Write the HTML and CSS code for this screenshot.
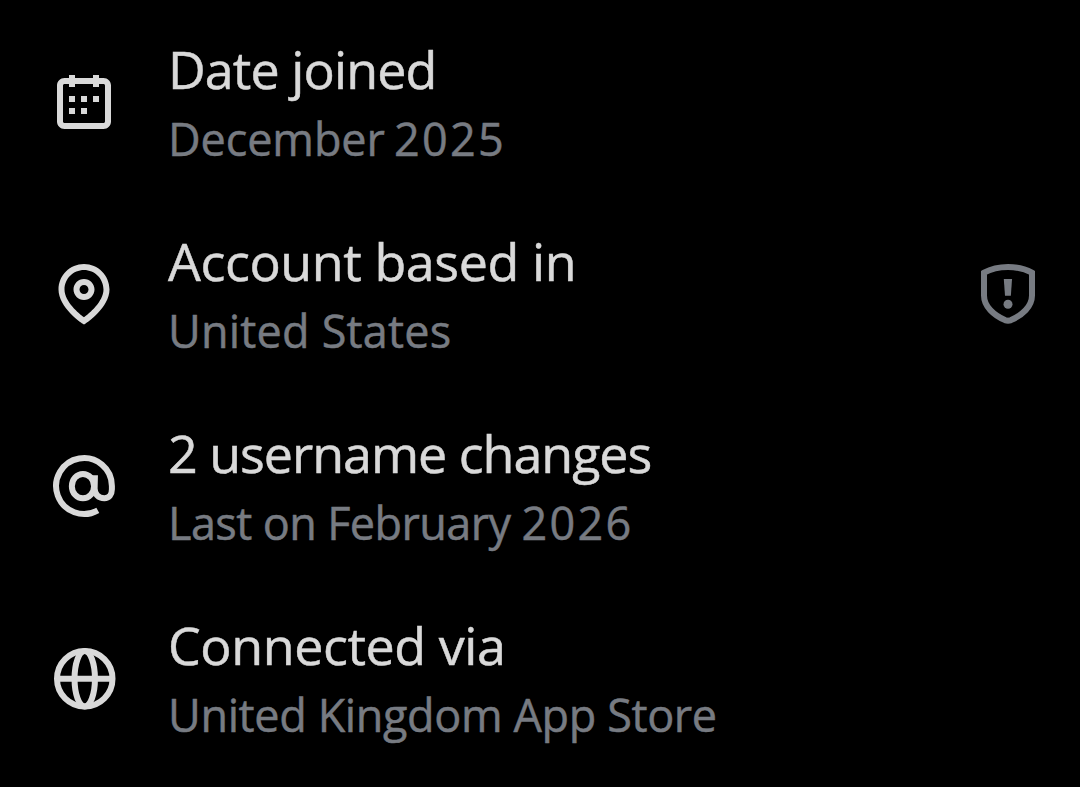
FILE: index.html
```
<!DOCTYPE html>
<html lang="en">
<head>
    <meta charset="UTF-8">
    <meta name="viewport" content="width=device-width, initial-scale=1.0">
    <link rel="stylesheet" href="styles.css">
    <title>About this account</title>
</head>
<body>
    <div class="account-info">
        <div class="row">
            <svg class="icon" viewBox="0 0 24 24">
                <path d="M7 4V3h2v1h6V3h2v1h1.5C19.89 4 21 5.12 21 6.5v12c0 1.38-1.11 2.5-2.5 2.5h-13C4.12 21 3 19.88 3 18.5v-12C3 5.12 4.12 4 5.5 4H7zm0 2H5.5c-.27 0-.5.22-.5.5v12c0 .28.23.5.5.5h13c.28 0 .5-.22.5-.5v-12c0-.28-.22-.5-.5-.5H17v1h-2V6H9v1H7V6zm0 6h2v-2H7v2zm0 4h2v-2H7v2zm4-4h2v-2h-2v2zm0 4h2v-2h-2v2zm4-4h2v-2h-2v2z"/>
            </svg>
            <div class="text">
                <div class="title joined">Date joined</div>
                <div class="subtitle joined-sub">December <span class="year">2025</span></div>
            </div>
        </div>

        <div class="row">
            <svg class="icon" viewBox="0 0 24 24">
                <path d="M12 7c-1.93 0-3.5 1.57-3.5 3.5S10.07 14 12 14s3.5-1.57 3.5-3.5S13.93 7 12 7zm0 5c-.827 0-1.5-.673-1.5-1.5S11.173 9 12 9s1.5.673 1.5 1.5S12.827 12 12 12zm0-10c-4.687 0-8.5 3.813-8.5 8.5 0 5.967 7.621 11.116 7.945 11.332l.555.37.555-.37c.324-.216 7.945-5.365 7.945-11.332C20.5 5.813 16.687 2 12 2zm0 17.77c-1.665-1.241-6.5-5.196-6.5-9.27C5.5 6.916 8.416 4 12 4s6.5 2.916 6.5 6.5c0 4.073-4.835 8.028-6.5 9.27z"/>
            </svg>
            <div class="text">
                <div class="title based">Account based in</div>
                <div class="subtitle based-sub">United States</div>
            </div>
            <svg class="icon shield" viewBox="0 0 24 24">
                <path class="line" d="M12 3c3.1 0 5.8.7 8 1.9v7.6c0 3.7-3.3 6.6-7 8.2q-1 .4-2 0c-3.7-1.6-7-4.5-7-8.2V4.9C6.2 3.7 8.9 3 12 3z"/>
                <path d="M10.6 7h2.75l-.4 5.55H11z"/>
                <circle cx="12" cy="15.4" r="1.5"/>
            </svg>
        </div>

        <div class="row">
            <svg class="icon" viewBox="0 0 24 24">
                <path class="line" d="M16.6 20.1A9.3 9.3 0 1 1 21.3 12v1.1c0 1.8-1 2.95-2.5 2.95-2 0-3.35-1.4-3.25-3.4l.1-4.25"/>
                <ellipse class="line" cx="11.65" cy="12.05" rx="3.7" ry="4.05"/>
            </svg>
            <div class="text">
                <div class="title changes">2 username changes</div>
                <div class="subtitle changes-sub">Last on February <span class="year">2026</span></div>
            </div>
        </div>

        <div class="row">
            <svg class="icon" viewBox="0 0 24 24">
                <circle class="line" cx="12.25" cy="12.25" r="9.25"/>
                <ellipse class="line" cx="12.25" cy="12.25" rx="3.4" ry="9.25"/>
                <path class="line" d="M3 12.25h18.5"/>
            </svg>
            <div class="text">
                <div class="title via">Connected via</div>
                <div class="subtitle via-sub">United Kingdom App Store</div>
            </div>
        </div>
    </div>
</body>
</html>
```
FILE: styles.css
```
body {
    font-family: "Open Sans", "Noto Sans", sans-serif;
    margin: 0;
    padding: 0;
    background-color: #000;
}

.account-info {
    display: flex;
    flex-direction: column;
    padding: 6px 36px 0 48px;
}

.row {
    display: flex;
    align-items: center;
    height: 192px;
}

.icon {
    width: 72px;
    height: 72px;
    flex-shrink: 0;
    fill: #d9d9d9;
    stroke: none;
}

.icon .line {
    fill: none;
    stroke: #d9d9d9;
    stroke-width: 2;
}

.shield {
    margin-left: auto;
    fill: #777b82;
}

.shield .line {
    stroke: #777b82;
}

.text {
    margin-left: 48px;
    padding-top: 4px;
    white-space: nowrap;
    -webkit-text-stroke: 0.5px;
}

.title {
    font-size: 52px;
    line-height: 70px;
    color: #d9d9d9;
}

.subtitle {
    font-size: 45px;
    line-height: 70px;
    color: #777b82;
}

.year {
    letter-spacing: 2.3px;
}

.joined {
    letter-spacing: -0.9px;
}

.joined-sub {
    letter-spacing: -0.1px;
    word-spacing: -2.5px;
}

.based {
    letter-spacing: -0.42px;
}

.based-sub {
    letter-spacing: 0.2px;
}

.changes {
    letter-spacing: -1.03px;
}

.changes-sub {
    letter-spacing: -0.6px;
    word-spacing: 0;
}

.via {
    letter-spacing: -0.42px;
}

.via-sub {
    letter-spacing: -0.38px;
}
```
